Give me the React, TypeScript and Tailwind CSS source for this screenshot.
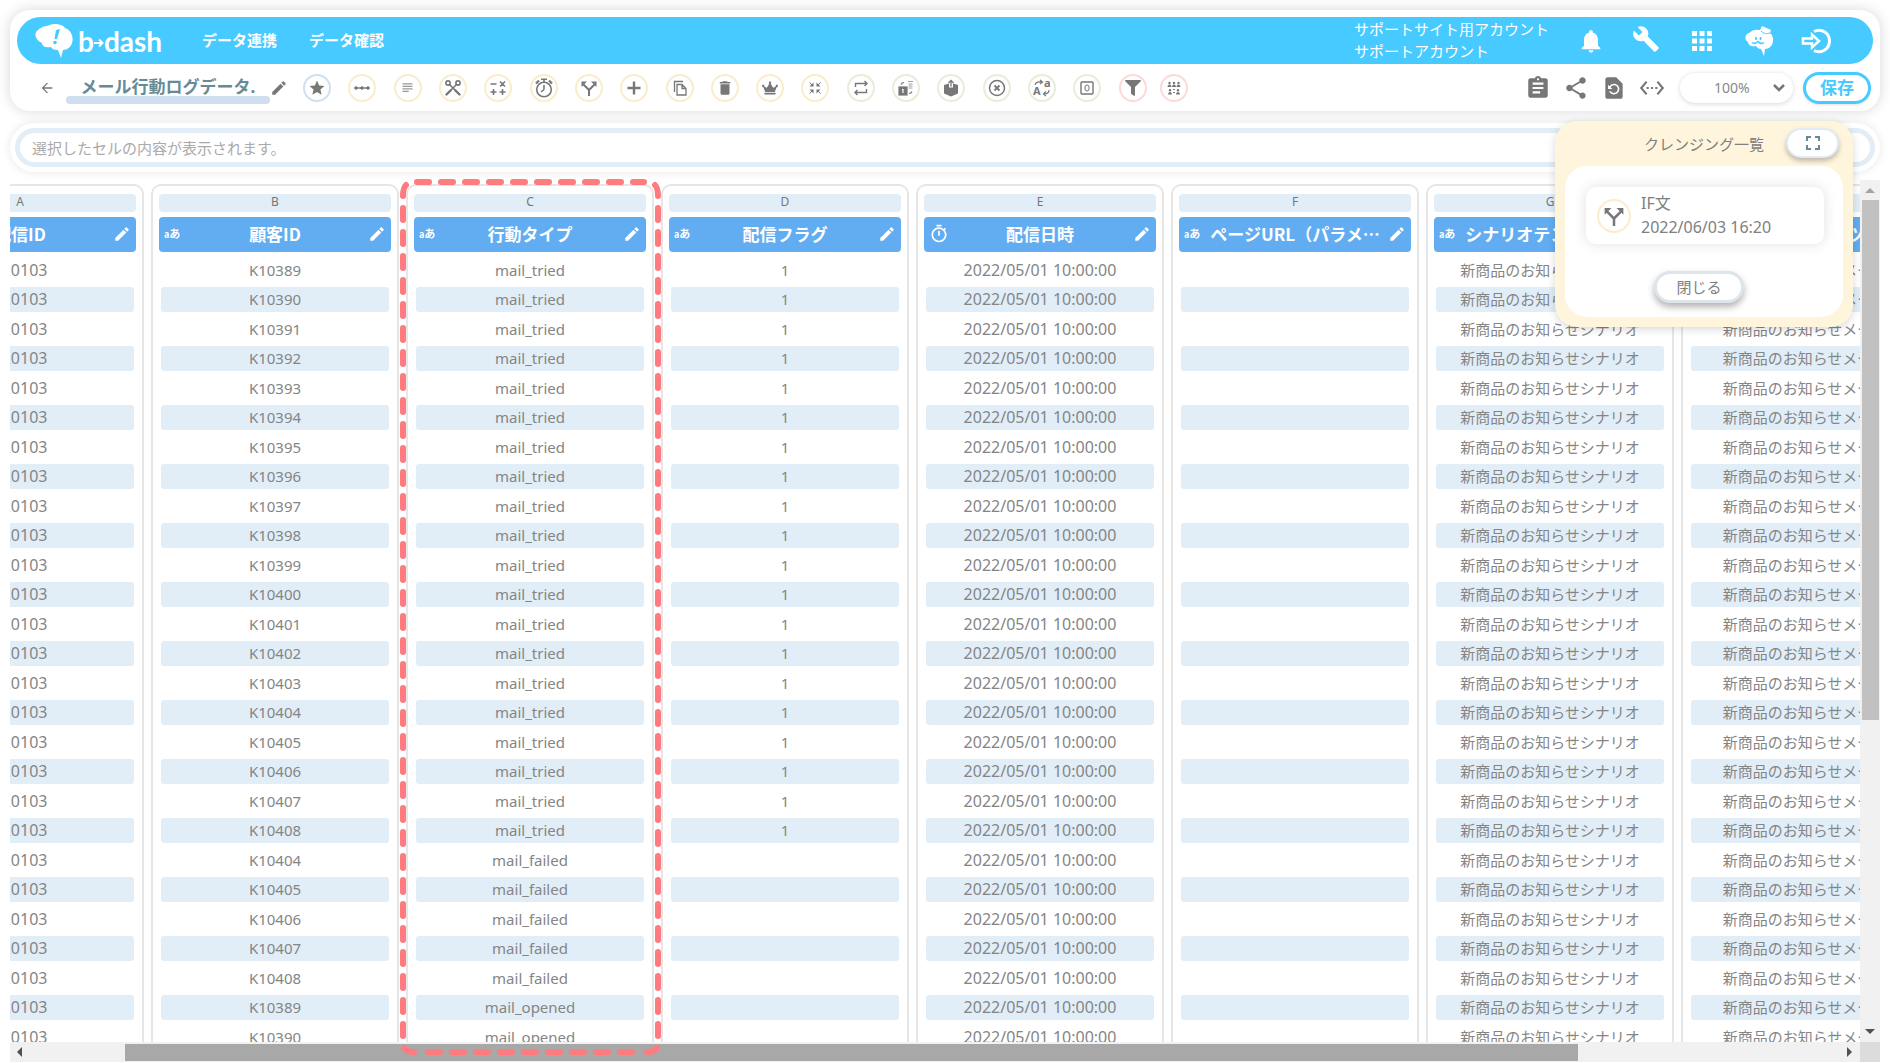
import React from 'react';
import {
    MdApps,
    MdArrowBack,
    MdAssignment,
    MdBuild,
    MdDelete,
    MdEdit,
    MdFullscreen,
    MdNotifications,
    MdOutlineTimer,
    MdRestorePage,
    MdSettingsEthernet,
    MdShare,
    MdStar,
    MdSubject,
} from 'react-icons/md';
import { FaCrown, FaFilter } from 'react-icons/fa';

type Tool = { label: string; border: string; icon: React.ReactNode };

type Column = {
    letter: string;
    name: string;
    kind: 'text' | 'time';
    size: string;
    value: (row: number) => string;
};

const BLUE = 'border-[#cfe0f0]';
const YELLOW = 'border-[#fbeccb]';
const GREEN = 'border-[#e8edd8]';
const PINK = 'border-[#fdd9d8]';

const ForkIcon = ({ className }: { className: string }) => (
    <svg viewBox="0 0 16 16" className={className} fill="none" stroke="currentColor" strokeWidth="2">
        <path d="M8 16V10L2.5 4.5M8 10l5.5-5.5" />
        <path d="M.5 1.5H6L.5 7zM15.5 1.5H10L15.5 7z" fill="currentColor" stroke="none" />
    </svg>
);

const tools: Tool[] = [
    { label: 'お気に入り', border: BLUE, icon: <MdStar className="size-[18px]" /> },
    {
        label: '連結',
        border: YELLOW,
        icon: (
            <svg viewBox="0 0 16 16" className="size-4" fill="currentColor" stroke="currentColor">
                <path d="M2 8h12" strokeWidth="1.4" />
                <circle cx="2" cy="8" r="1.3" />
                <circle cx="8" cy="8" r="1.3" />
                <circle cx="14" cy="8" r="1.3" />
            </svg>
        ),
    },
    { label: '置換', border: YELLOW, icon: <MdSubject className="size-[15px] text-[#999]" /> },
    {
        label: '分割',
        border: YELLOW,
        icon: (
            <svg viewBox="0 0 16 16" className="size-4" fill="none" stroke="currentColor" strokeWidth="1.6" strokeLinecap="round">
                <circle cx="3" cy="3" r="2.1" />
                <circle cx="13" cy="3" r="2.1" />
                <path d="M4.5 4.5L8 8l6 6M11.5 4.5L8 8l-6 6" />
                <path d="M10.5 10.5l4 4M5.5 10.5l-4 4" strokeWidth="2.4" />
            </svg>
        ),
    },
    {
        label: '四則演算',
        border: YELLOW,
        icon: (
            <svg viewBox="0 0 16 16" className="size-4" fill="none" stroke="currentColor" strokeWidth="1.6">
                <path d="M.5 4h6M10 1.5l5 5M15 1.5l-5 5M.5 12h6M3.5 9v6M9.5 12h6M12.5 9v6" />
            </svg>
        ),
    },
    {
        label: '日時計算',
        border: YELLOW,
        icon: (
            <svg viewBox="0 0 20 20" className="size-5" fill="none" stroke="currentColor" strokeWidth="1.6">
                <circle cx="10" cy="11.5" r="7.3" />
                <path d="M10 11.5V7M10 11.5L7 14M10 4V1.5M7 1.2h6" />
                <path d="M2 5.5l3-3M15 2.5l3 3" strokeWidth="2.2" />
            </svg>
        ),
    },
    { label: 'IF文', border: YELLOW, icon: <ForkIcon className="size-4" /> },
    {
        label: '追加',
        border: YELLOW,
        icon: (
            <svg viewBox="0 0 14 14" className="size-[14px]" stroke="currentColor" strokeWidth="2.4">
                <path d="M7 .5v13M.5 7h13" />
            </svg>
        ),
    },
    {
        label: '複製',
        border: YELLOW,
        icon: (
            <svg viewBox="0 0 16 16" className="size-4" fill="none" stroke="currentColor" strokeWidth="1.3">
                <path d="M2.5 12V1.5H11M5 4.5h5l4 4V15H5zM10 4.5v4h4" />
            </svg>
        ),
    },
    { label: '削除', border: YELLOW, icon: <MdDelete className="size-[18px]" /> },
    { label: 'ランキング', border: YELLOW, icon: <FaCrown className="size-4" /> },
    {
        label: '集約',
        border: YELLOW,
        icon: (
            <svg viewBox="0 0 16 16" className="size-4" fill="currentColor" stroke="currentColor">
                <path d="M2.5 2.5l3 3M13.5 2.5l-3 3M2.5 13.5l3-3M13.5 13.5l-3-3" />
                <path d="M2.5 6.5h4v-4zM13.5 6.5h-4v-4zM2.5 9.5h4v4zM13.5 9.5h-4v4z" stroke="none" />
            </svg>
        ),
    },
    {
        label: '変換',
        border: GREEN,
        icon: (
            <svg viewBox="0 0 16 16" className="size-4" fill="none" stroke="currentColor" strokeWidth="1.4">
                <path d="M2.5 7V3.5H14M11.5 1L14 3.5 11.5 6M13.5 9v3.5H2M4.5 10L2 12.5 4.5 15" />
            </svg>
        ),
    },
    {
        label: '型変換',
        border: GREEN,
        icon: (
            <svg viewBox="0 0 16 16" className="size-4" fill="none" stroke="currentColor" strokeWidth="1.2">
                <rect x="1" y="7" width="8" height="8" fill="currentColor" />
                <path d="M4 9.5h1V13" stroke="white" />
                <path d="M10 1.5h5M10.5 4h4M10.5 6h4M10.5 8h4" strokeWidth="1" opacity=".7" />
                <path d="M3 4.5C3.5 3 4.5 2.5 6 2.5M11 13.5c1.5 0 2.5-.5 3-2" />
            </svg>
        ),
    },
    {
        label: '抽出',
        border: GREEN,
        icon: (
            <svg viewBox="0 0 16 18" className="h-[18px] w-4" fill="currentColor">
                <path d="M1 6l5-1.5v4h4v-4L15 6v8.5l-7 3-7-3z" />
                <path d="M8 7.5v-6M5.5 4L8 1.5 10.5 4" fill="none" stroke="currentColor" strokeWidth="1.3" />
            </svg>
        ),
    },
    {
        label: '除外',
        border: GREEN,
        icon: (
            <svg viewBox="0 0 18 18" className="size-[18px]" fill="none" stroke="currentColor" strokeWidth="1.5">
                <circle cx="9" cy="9" r="7.5" />
                <path d="M6.5 6.5l5 5M11.5 6.5l-5 5" strokeWidth="1.8" />
            </svg>
        ),
    },
    {
        label: '文字変換',
        border: GREEN,
        icon: (
            <svg viewBox="0 0 18 18" className="size-[18px]" fill="none" stroke="currentColor" strokeWidth="1.2">
                <path d="M2 6c.5-2.5 3-3.5 7-3M7 1l2.5 2L7 5M16 11c0 3-2 4-5 4M13 12.5L10.5 15l2.5 2" />
                <text x="0" y="16" fontSize="11" fontWeight="700" fill="currentColor" stroke="none">A</text>
                <text x="11" y="8" fontSize="11" fontWeight="700" fill="currentColor" stroke="none">a</text>
            </svg>
        ),
    },
    {
        label: '0埋め',
        border: GREEN,
        icon: (
            <svg viewBox="0 0 14 14" className="size-[14px]" fill="none" stroke="currentColor" strokeWidth="1.4">
                <rect x="1" y="1" width="12" height="12" rx="1" />
                <rect x="5" y="4" width="4" height="6" rx="2" strokeWidth="1" />
            </svg>
        ),
    },
    { label: '絞り込み', border: PINK, icon: <FaFilter className="size-4" /> },
    {
        label: 'グループ',
        border: PINK,
        icon: (
            <svg viewBox="0 0 16 16" className="size-4" fill="currentColor">
                <circle cx="3.5" cy="3" r="1.2" />
                <circle cx="8" cy="3" r="1.2" />
                <circle cx="12.5" cy="3" r="1.2" />
                <path d="M1.5 7c0-3.5 4-3.5 4 0zM6 7c0-3.5 4-3.5 4 0zM10.5 7c0-3.5 4-3.5 4 0zM2 14.5c0-3.5 4-3.5 4 0zM10 14.5c0-3.5 4-3.5 4 0z" />
                <circle cx="4" cy="10.3" r="1.2" />
                <circle cx="12" cy="10.3" r="1.2" />
                <path d="M7 9h2v1H7zM7 12h2v1H7z" />
            </svg>
        ),
    },
];

const customerId = (row: number) => {
    if (row < 20) return `K${10389 + row}`;
    if (row < 25) return `K${10404 + row - 20}`;
    return `K${10389 + row - 25}`;
};

const actionType = (row: number) => {
    if (row < 20) return 'mail_tried';
    return row < 25 ? 'mail_failed' : 'mail_opened';
};

const columns: Column[] = [
    { letter: 'A', name: '配信ID', kind: 'text', size: 'text-base', value: () => '220103' },
    { letter: 'B', name: '顧客ID', kind: 'text', size: 'text-[15px]', value: customerId },
    { letter: 'C', name: '行動タイプ', kind: 'text', size: 'text-[15px]', value: actionType },
    { letter: 'D', name: '配信フラグ', kind: 'text', size: 'text-[15px]', value: (row) => (row < 20 ? '1' : '') },
    { letter: 'E', name: '配信日時', kind: 'time', size: 'text-base', value: () => '2022/05/01 10:00:00' },
    { letter: 'F', name: 'ページURL（パラメ…', kind: 'text', size: 'text-[15px]', value: () => '' },
    { letter: 'G', name: 'シナリオテンプレー…', kind: 'text', size: 'text-[15px]', value: () => '新商品のお知らせシナリオ' },
    { letter: 'H', name: 'メールコンテンツ名', kind: 'text', size: 'text-[15px]', value: () => '新商品のお知らせメール' },
];

const rows = Array.from({ length: 27 }, (_, i) => i);

const Logo: React.FC = () => (
    <a href="#" aria-label="b→dash" className="flex items-center text-white">
        <svg viewBox="0 0 38 34" className="h-[34px] w-[38px]" fill="currentColor">
            <path d="M12 2C17-1 27-1 30 4c6 2 9 9 7 15-1 4-5 7-9 7l-2 8-3-8c-4 0-6-1-7-3-4 1-9 0-9-4C1 17-2 9 3 6c2-2 6-4 9-4z" />
            <path d="M21 6l4-1-3 10h-2.5z" fill="#47caff" />
            <circle cx="20" cy="18.5" r="1.8" fill="#47caff" />
        </svg>
        <span className="ml-[5px] flex items-center font-[Lato,sans-serif] text-[28px] leading-8 font-bold">
            b
            <svg viewBox="0 0 10 10" className="mt-1 size-[10px]" fill="none" stroke="currentColor" strokeWidth="2">
                <path d="M0 5h8M5 1.5L8.5 5 5 8.5" />
            </svg>
            dash
        </span>
    </a>
);

const BrainIcon: React.FC = () => (
    <svg viewBox="0 0 30 30" className="size-[30px]" fill="currentColor">
        <path d="M5 7C8 4 12 3 16 4l2-4 9 4-1 3c4 3 4 10 1 13-1 2-4 3-6 3l-1 7-3-7c-2 0-4-1-5-3-5 1-8-1-8-4-4-2-3-8 1-9z" />
        <g fill="none" stroke="#47caff">
            <path d="M8 16.5c2 1.5 4 1 6-1 1.5 2 4 2.5 6 1" strokeWidth="1.5" />
            <path d="M17 5c3 3 6 3 9 2" />
        </g>
        <ellipse cx="12" cy="12.5" rx="1" ry="1.7" fill="#47caff" />
        <ellipse cx="16.5" cy="12.5" rx="1" ry="1.7" fill="#47caff" />
    </svg>
);

const Header: React.FC = () => (
    <header className="rounded-[20px] bg-white px-[7px] pt-[7px] shadow-[0_0_14px_rgba(0,0,0,0.16)]">
        <div className="flex h-[47px] items-center rounded-full bg-[#47caff] pr-[42px] pl-[18px] text-white">
            <Logo />
            <nav className="ml-10 flex gap-8 text-[15px] font-bold">
                <a href="#">データ連携</a>
                <a href="#">データ確認</a>
            </nav>
            <div className="ml-auto flex items-center">
                <p className="mr-7 pb-[2px] text-[15px] leading-[22px]">
                    サポートサイト用アカウント
                    <br />
                    サポートアカウント
                </p>
                <div className="flex items-center gap-[27px]">
                    <button aria-label="通知"><MdNotifications className="size-7" /></button>
                    <button aria-label="設定" className="pb-1"><MdBuild className="size-7" /></button>
                    <button aria-label="アプリ"><MdApps className="size-[30px]" /></button>
                    <button aria-label="サポート"><BrainIcon /></button>
                    <button aria-label="ログアウト">
                        <svg viewBox="0 0 30 26" className="h-[26px] w-[30px]" fill="none" stroke="currentColor" strokeWidth="2.5">
                            <path d="M2 10.5h9v-4l7 6.5-7 6.5v-4H2z" />
                            <path d="M13 3.5c8-4 15.5 2 15.5 9.5S21 26.5 13 22.5" strokeWidth="3" />
                        </svg>
                    </button>
                </div>
            </div>
        </div>
        <div className="flex h-[47px] items-center pr-[2px] pl-[22px] text-[#777]">
            <button aria-label="戻る"><MdArrowBack className="size-4" /></button>
            <div className="mt-1 ml-[11px] w-[204px]">
                <h1 className="text-center text-[17px] leading-6 font-bold text-[#668b97]">メール行動ログデータ.</h1>
                <div className="-mt-[3px] h-2 rounded-full bg-[#d0dfef]" />
            </div>
            <button aria-label="名前を編集"><MdEdit className="size-[18px]" /></button>
            <div className="ml-[15px] flex w-[885px] justify-between">
                {tools.map((tool) => (
                    <button
                        key={tool.label}
                        aria-label={tool.label}
                        className={`flex size-7 items-center justify-center rounded-full border-2 last:-ml-1 ${tool.border}`}
                    >
                        {tool.icon}
                    </button>
                ))}
            </div>
            <div className="ml-auto flex items-center">
                <div className="flex items-center gap-3">
                    <button aria-label="メモ"><MdAssignment className="size-[26px]" /></button>
                    <button aria-label="共有"><MdShare className="size-[26px]" /></button>
                    <button aria-label="復元"><MdRestorePage className="size-[26px]" /></button>
                    <button aria-label="コード"><MdSettingsEthernet className="size-[26px]" /></button>
                </div>
                <div className="relative ml-[15px]">
                    <select
                        aria-label="表示倍率"
                        className="h-[30px] w-[113px] appearance-none rounded-full bg-white pl-[34px] text-sm text-[#888] shadow-[0_1px_5px_rgba(0,0,0,0.16)]"
                    >
                        <option>100%</option>
                    </select>
                    <svg viewBox="0 0 12 8" className="pointer-events-none absolute top-[11px] right-2 h-2 w-3" fill="none" stroke="currentColor" strokeWidth="2.5">
                        <path d="M1 1l5 5 5-5" />
                    </svg>
                </div>
                <button className="ml-[10px] h-8 w-[68px] rounded-full border-[3px] border-[#47caff] text-[17px] leading-[26px] font-bold text-[#47caff] shadow-sm">
                    保存
                </button>
            </div>
        </div>
    </header>
);

const DataTable: React.FC = () => (
    <table className="-ml-[121px] w-[2047px] table-fixed border-separate border-spacing-x-[7px] border-spacing-y-0 text-center text-[#858585]">
        <thead>
            <tr>
                {columns.map((column) => (
                    <th key={column.letter} className="rounded-t-[10px] border-2 border-b-0 border-[#e6e6e6] px-[6px] pt-2 pb-1 font-normal">
                        <div className="h-[18px] rounded-sm bg-[#e1eef8] text-xs leading-[15px] text-[#777]">{column.letter}</div>
                        <div className="mt-[5px] flex h-[35px] items-center rounded-sm bg-[#62adf2] px-[5px] pb-[2px] font-[Noto_Sans_CJK_JP,sans-serif] text-white">
                            <span className="w-5 text-left text-[11px] font-bold whitespace-nowrap">
                                {column.kind === 'time' ? (
                                    <MdOutlineTimer className="size-5" />
                                ) : (
                                    <>
                                        <span className="text-[9px]">a</span>あ
                                    </>
                                )}
                            </span>
                            <span className="flex-1 text-[17px] font-bold whitespace-nowrap">{column.name}</span>
                            <button aria-label={`${column.name}を編集`} className="flex w-5 justify-end">
                                <MdEdit className="size-[18px]" />
                            </button>
                        </div>
                    </th>
                ))}
            </tr>
        </thead>
        <tbody>
            {rows.map((row) => (
                <tr key={row}>
                    {columns.map((column) => (
                        <td key={column.letter} className="border-x-2 border-[#e6e6e6] px-2 py-0">
                            <div className={row % 2 ? 'pt-[2px] pb-[3px]' : 'py-[2px]'}>
                                <div className={`h-[25px] rounded-[3px] leading-6 ${column.size} ${row % 2 ? 'bg-[#e1eef8]' : ''}`}>
                                    {column.value(row)}
                                </div>
                            </div>
                        </td>
                    ))}
                </tr>
            ))}
        </tbody>
    </table>
);

// 選択中の列を囲む破線
const SelectionFrame: React.FC = () => (
    <svg
        viewBox="0 0 262 878"
        className="pointer-events-none absolute -top-[2px] left-[390px] h-[878px] w-[262px]"
        fill="none"
        stroke="#ff7b80"
        strokeWidth="6"
        strokeLinecap="round"
    >
        <path d="M17 4H244M28 874H244M3 30V860M258 30V860" strokeDasharray="12 12" />
        <path d="M3 18Q3 10 6 7M258 18Q258 10 255 7M4 870Q7 874 14 874M257 870Q254 874 247 874" />
    </svg>
);

const CleansingPanel: React.FC = () => (
    <aside className="absolute top-[121px] right-[37px] w-[298px] rounded-[22px] bg-[#fff5dd] px-[10px] pb-[10px] text-[#808080] shadow-[0_2px_8px_rgba(0,0,0,0.16)]">
        <div className="flex h-[45px] items-center justify-end gap-[22px] pr-1">
            <h2 className="pt-[2px] text-[15px]">クレンジング一覧</h2>
            <button aria-label="拡大" className="mb-[2px] flex h-[30px] w-[53px] items-center justify-center rounded-full border-2 border-[#dfecf7] bg-white text-[#668b97] shadow-[0_3px_5px_rgba(0,0,0,0.25)]">
                <MdFullscreen className="size-6" />
            </button>
        </div>
        <div className="flex flex-col items-center rounded-[22px] bg-white pt-[21px] pr-[19px] pb-[14px] pl-[21px]">
            <div className="flex h-[57px] w-full items-center rounded-[10px] bg-white pl-[11px] shadow-[0_0_14px_rgba(0,0,0,0.12)]">
                <span className="flex size-[34px] items-center justify-center rounded-full border-2 border-[#fbeccb] text-[#777]">
                    <ForkIcon className="size-5" />
                </span>
                <p className="ml-[10px] pb-[2px] text-base leading-6">
                    IF文
                    <br />
                    2022/06/03 16:20
                </p>
            </div>
            <button className="mt-[27px] mr-3 h-8 w-[90px] rounded-full border-[3px] border-[#dde5ea] bg-white text-[15px] leading-6 shadow-[0_4px_7px_rgba(0,0,0,0.3)]">
                閉じる
            </button>
        </div>
    </aside>
);

const App: React.FC = () => {
    return (
        <div className="relative flex h-screen flex-col overflow-hidden bg-white px-[10px] pt-[10px] pb-px font-[Noto_Sans,Noto_Sans_CJK_JP,sans-serif]">
            <Header />
            <div className="mt-3 rounded-full bg-white p-[5px] shadow-[0_0_10px_rgba(0,0,0,0.1)]">
                <input
                    type="text"
                    aria-label="セルの内容"
                    placeholder="選択したセルの内容が表示されます。"
                    className="block h-[39px] w-full rounded-full border-[5px] border-[#e1eef8] px-3 text-[15px] placeholder:text-[#aaa]"
                />
            </div>
            <main className="relative mt-2 grid min-h-0 flex-1 grid-cols-[minmax(0,1fr)_20px] grid-rows-[minmax(0,1fr)_20px]">
                <div className="overflow-hidden pt-1">
                    <DataTable />
                </div>
                <div className="flex flex-col items-center bg-[#f1f1f1]">
                    <svg viewBox="0 0 20 20" className="size-5" fill="#a3a3a3"><path d="M5 13h10l-5-5z" /></svg>
                    <div className="h-[520px] w-[17px] bg-[#c1c1c1]" />
                    <svg viewBox="0 0 20 20" className="mt-auto size-5" fill="#505050"><path d="M5 7h10l-5 5z" /></svg>
                </div>
                <div className="flex items-center bg-[#f1f1f1]">
                    <svg viewBox="0 0 20 20" className="size-5" fill="#505050"><path d="M12 5v10L7 10z" /></svg>
                    <div className="ml-[95px] h-[17px] w-[1453px] bg-[#a8a8a8]" />
                    <svg viewBox="0 0 20 20" className="ml-auto size-5" fill="#505050"><path d="M7 5v10l5-5z" /></svg>
                </div>
                <div className="bg-[#dcdcdc]" />
                <SelectionFrame />
            </main>
            <CleansingPanel />
        </div>
    );
};

export default App;
